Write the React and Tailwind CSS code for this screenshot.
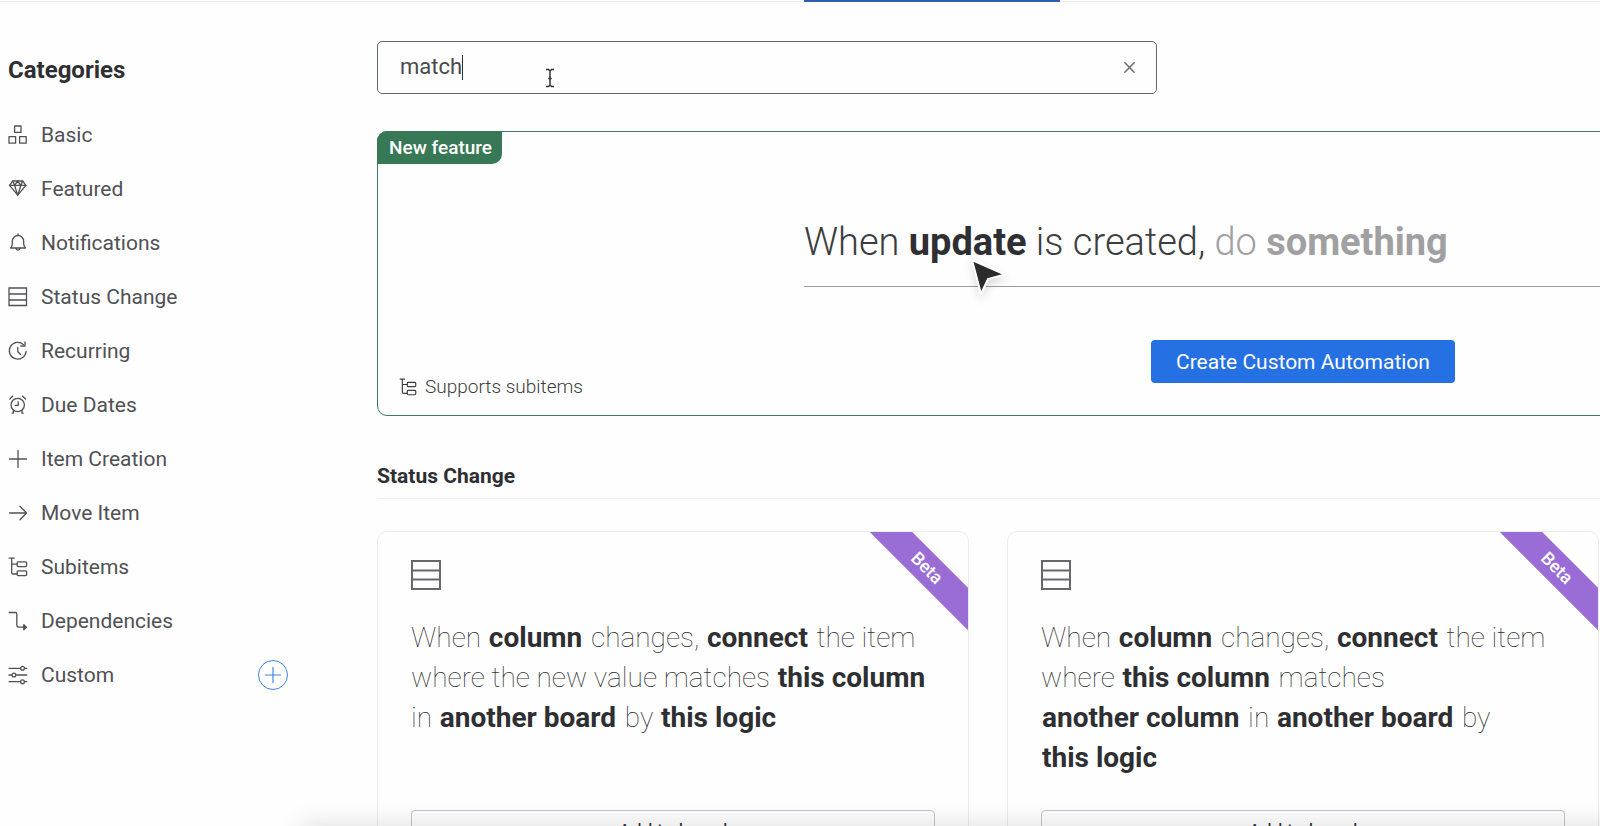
import React, { useState } from "react";

function Glyph({ children, className = "size-[20px]" }) {
  return (
    <svg
      viewBox="0 0 20 20"
      className={className + " shrink-0 overflow-visible"}
      fill="none"
      stroke="currentColor"
      strokeWidth="1.3"
      strokeLinecap="round"
      strokeLinejoin="round"
      aria-hidden="true"
    >
      {children}
    </svg>
  );
}

const glyphs = {
  basic: (
    <>
      <rect x="6.6" y="1" width="6.4" height="6.4" />
      <rect x="1" y="11.6" width="6.6" height="6.6" />
      <rect x="11.6" y="11.6" width="6.6" height="6.6" />
    </>
  ),
  featured: (
    <>
      <path d="M4.8 2h9.800l3.300 4.300L9.700 16.200 1.500 6.300z" />
      <path d="M1.500 6.300h16.400M4.800 2l1.700 4.300 3.200 9.900 3.200-9.900L14.600 2M6.500 6.300 9.700 2l3.200 4.300" />
    </>
  ),
  bell: (
    <>
      <path d="M2.6 15h14.800c-1.200-1.200-1.700-2.600-1.700-4.300V8.200a5.700 5.700 0 0 0-11.400 0v2.500c0 1.700-.5 3.100-1.700 4.300z" />
      <path d="M10 2.400V1M8 15.300c.2 2.300 3.800 2.300 4 0" />
    </>
  ),
  rows: <path d="M1 1h17.500v17.500H1zM1 7h17.500M1 13h17.500" strokeLinejoin="miter" />,
  recurring: (
    <>
      <path d="M15.500 3.600A8.400 8.400 0 1 0 18.100 10.500" />
      <path d="M17 .8v4.200h-4.200M9.800 6.500v4.200l2.600 2.600" />
    </>
  ),
  alarm: (
    <>
      <circle cx="9.700" cy="10" r="6.700" />
      <path d="M10.200 6.800v3.600H7.400M1.800 4 4.700 1.200M17.600 4l-2.900-2.800M5.400 15.400v2.800H4.200M14 15.400v2.800h1.200" />
    </>
  ),
  plus: <path d="M10 1.500v17M1.500 10h17" />,
  arrow: <path d="M1.500 10h17M12 3.300l6.500 6.700-6.500 6.700" />,
  subitems: (
    <>
      <path d="M1.200 1.200h5M3.700 1.200v14.500c0 1 .5 1.300 1.400 1.300h4M3.700 7.200h5.400" />
      <rect x="9.200" y="4.800" width="9.400" height="4.800" rx="1" />
      <rect x="9.200" y="13.800" width="9.400" height="4.800" rx="1" />
    </>
  ),
  dependency: (
    <>
      <path d="M1.200 1.500h6.200c1 0 1.400.5 1.400 1.400v10.800c0 1.700.8 2.500 2.400 2.500h6.400" />
      <path d="M15.800 13.700l2.600 2.500-2.600 2.500z" fill="currentColor" />
    </>
  ),
  sliders: (
    <>
      <path d="M1 3.300h11M17 3.300h1.800M1 10h2.400M8.400 10h10.400M1 16.700h11M17 16.700h1.800" />
      <circle cx="14.500" cy="3.300" r="1.900" />
      <circle cx="5.900" cy="10" r="1.900" />
      <circle cx="14.500" cy="16.700" r="1.900" />
    </>
  ),
};

const categories = [
  ["Basic", "basic"],
  ["Featured", "featured"],
  ["Notifications", "bell"],
  ["Status Change", "rows"],
  ["Recurring", "recurring"],
  ["Due Dates", "alarm"],
  ["Item Creation", "plus"],
  ["Move Item", "arrow"],
  ["Subitems", "subitems"],
  ["Dependencies", "dependency"],
  ["Custom", "sliders"],
];

const recipes = [
  [
    "When ", ["column"], " changes, ", ["connect"], " the item where the new value matches ",
    ["this column"], " in ", ["another board"], " by ", ["this logic"],
  ],
  [
    "When ", ["column"], " changes, ", ["connect"], " the item where ", ["this column"], " matches ",
    ["another column"], " in ", ["another board"], " by ", ["this logic"],
  ],
];

function Sidebar() {
  return (
    <aside className="w-[377px] shrink-0 pl-2">
      <h2 className="pt-[52px] text-[24px] leading-[32px] font-bold">Categories</h2>
      <nav className="mt-[22px] w-[280px]">
        <ul>
          {categories.map(([label, icon]) => (
            <li key={label} className="flex h-[54px] items-center justify-between">
              <a href={"#" + icon} className="flex items-center gap-[13px] text-[21px] leading-[28px] text-[#505155]">
                <Glyph>{glyphs[icon]}</Glyph>
                {label}
              </a>
              {label === "Custom" && (
                <button
                  aria-label="Create custom automation"
                  className="flex size-[30px] items-center justify-center rounded-full border border-[#3b83e6] text-[#3b83e6]"
                >
                  <Glyph className="size-[18px]">{glyphs.plus}</Glyph>
                </button>
              )}
            </li>
          ))}
        </ul>
      </nav>
    </aside>
  );
}

function SearchBox() {
  const [term, setTerm] = useState("match");
  return (
    <div className="relative mt-[39px] flex h-[53px] w-[780px] items-center rounded-[5px] border border-[#5f6779] pr-[18px] pl-[22px]">
      <input
        aria-label="Search automations"
        value={term}
        onChange={(e) => setTerm(e.target.value)}
        className="h-full min-w-0 flex-1 bg-transparent pb-[2px] text-[22px] text-[#48494d] outline-none"
      />
      <button aria-label="Clear search" onClick={() => setTerm("")} className="flex size-[18px] items-center justify-center text-[#6c6c72]">
        <Glyph className="size-[11px]">
          <path d="M1.500 1.500l17 17M18.500 1.500l-17 17" strokeWidth="2.800" />
        </Glyph>
      </button>
      <span className="absolute top-[13px] left-[84px] h-[25px] w-px bg-[#323338]" />
      <svg viewBox="0 0 10 20" className="absolute top-[26px] left-[167px] h-[20px] w-[10px]" fill="none" stroke="#333" strokeWidth="1.500" aria-hidden="true">
        <path d="M1 1.500h2.500L5 3l1.500-1.500H9M1 18.500h2.500L5 17l1.500 1.500H9M5 3v14M3.300 10.500h3.400" />
      </svg>
    </div>
  );
}

function FeatureCard() {
  return (
    <section className="relative mt-[37px] flex h-[285px] flex-col items-center rounded-[10px] border border-[#3c7d67]">
      <span className="absolute -top-px -left-px rounded-tl-[10px] rounded-br-[10px] bg-[#377856] pr-[10px] pl-3 text-[19px] leading-[33px] font-medium text-white">
        New feature
      </span>
      <p className="relative mt-[86px] w-[998px] border-b border-[#9c9c9c] pb-[20px] text-[38px] leading-[48px] font-light text-[#3c3d40]">
        When <b className="font-bold text-[#2e2f32]">update</b> is created,{" "}
        <span className="text-[#a0a0a3]">
          do <b className="font-bold">something</b>
        </span>
        <svg
          viewBox="0 0 40 40"
          className="absolute top-[40px] left-[165px] size-[40px] overflow-visible drop-shadow-lg"
          aria-hidden="true"
        >
          <path d="M3 2l33 14.500-17 4.500-7 15z" fill="#2b2b2b" stroke="#fff" strokeWidth="2" />
        </svg>
      </p>
      <button className="mt-[53px] h-[43px] rounded-[4px] bg-[#2570e2] px-[25px] text-[21px] leading-[28px] text-white">
        Create Custom Automation
      </button>
      <div className="absolute bottom-[14px] left-[21px] flex items-center gap-[8px] text-[19px] leading-[28px] font-light text-[#3c3d40]">
        <Glyph className="size-[18px]">{glyphs.subitems}</Glyph>
        Supports subitems
      </div>
    </section>
  );
}

function RecipeCard({ parts }) {
  return (
    <article className="relative flex h-[360px] flex-col overflow-hidden rounded-[10px] border border-[#ececec] px-[33px] pt-[28px]">
      <span className="absolute top-[23px] -right-[41px] w-[160px] rotate-45 bg-[#9a6cd6] pr-[6px] text-center text-[18px] leading-[30px] font-medium text-white">
        Beta
      </span>
      <svg viewBox="0 0 30 30" className="size-[30px]" fill="none" stroke="#68686c" strokeWidth="2" aria-hidden="true">
        <path d="M1 1h28v28H1zM1 10.500h28M1 19.500h28" />
      </svg>
      <p className="mt-[28px] h-[160px] text-[28px] leading-[40px] font-thin">
        {parts.map((part, i) =>
          typeof part === "string" ? (
            part
          ) : (
            <b key={i} className="mr-[2px] ml-px font-bold whitespace-nowrap">
              {part[0]}
            </b>
          )
        )}
      </p>
      <button className="mt-[32px] h-[42px] rounded-[4px] border border-[#c3c4c9] text-[19px] leading-[28px]">Add to board</button>
    </article>
  );
}

export default function App() {
  return (
    <div className="relative h-screen overflow-hidden bg-[#fefefe] font-['Roboto',sans-serif] text-[#2e2f32]">
      <header className="flex h-[2px] border-b border-[#ececee]">
        <span className="relative ml-[804px] h-[2px] w-[256px] bg-[#2f5fab]" />
      </header>
      <div className="flex">
        <Sidebar />
        <main className="min-w-[1852px] flex-1">
          <SearchBox />
          <FeatureCard />
          <h3 className="mt-[46px] border-b border-[#f0f0f0] pb-[8px] text-[21px] leading-[28px] font-bold">Status Change</h3>
          <div className="mt-[32px] grid grid-cols-3 gap-[38px]">
            {recipes.map((parts, i) => (
              <RecipeCard key={i} parts={parts} />
            ))}
          </div>
        </main>
      </div>
      <div className="pointer-events-none absolute -right-[40px] -bottom-[16px] left-[300px] h-[16px] shadow-[0_0_26px_rgba(0,0,0,0.16)]" />
    </div>
  );
}
